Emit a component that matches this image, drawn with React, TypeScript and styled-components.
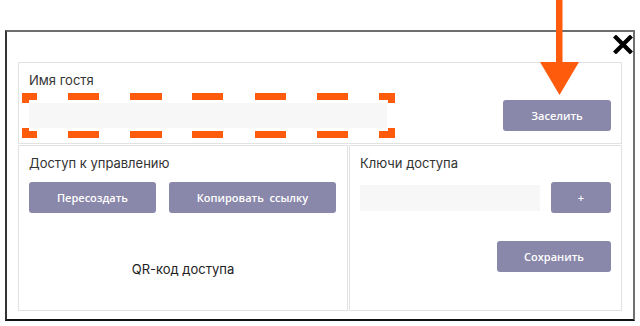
import * as React from 'react'
import styled, { createGlobalStyle } from 'styled-components'

const GlobalStyle = createGlobalStyle`
  html, body {
    margin: 0;
    padding: 0;
    background: #ffffff;
  }
  body {
    font-family: Inter, 'Open Sans', sans-serif;
  }
`

const Page = styled.div`
  position: relative;
  width: 640px;
  height: 326px;
  padding: 30px 0 0 5px;
  box-sizing: border-box;
`

const Frame = styled.div`
  width: 630px;
  height: 291px;
  box-sizing: border-box;
  border: 2px solid;
  border-color: #6e6e6e #707070 #111111 #333333;
  padding: 0 11px 8px 11px;
  display: flex;
  flex-direction: column;
`

const Header = styled.div`
  height: 30px;
  display: flex;
  justify-content: flex-end;
  align-items: flex-start;
  padding-top: 3px;
  box-sizing: border-box;
  margin-right: -11px;
`

const CloseButton = styled.button`
  border: 0;
  background: none;
  padding: 0;
  width: 20px;
  height: 19px;
  display: flex;
  cursor: pointer;
`

const Panel = styled.section<{ $grow?: boolean }>`
  border: 1px solid #e2e2e2;
  padding: 9px 10px 12px 10px;
  box-sizing: border-box;
  display: flex;
  flex-direction: column;
  ${({ $grow }) => ($grow ? 'flex: 1;' : '')}
`

const BottomRow = styled.div`
  display: flex;
  gap: 1px;
  margin-top: 1px;
  flex: 1;
`

const Title = styled.div`
  font-family: Inter, sans-serif;
  font-size: 13px;
  line-height: 16px;
  color: #333333;
`

const FieldRow = styled.div<{ $top: number }>`
  display: flex;
  align-items: center;
  justify-content: space-between;
  margin-top: ${({ $top }) => $top}px;
  gap: 10px;
`

const Input = styled.input<{ $width: number }>`
  width: ${({ $width }) => $width}px;
  height: 25px;
  border: 0;
  outline: none;
  background: #f7f7f7;
  padding: 0 8px;
  box-sizing: border-box;
  font-family: Inter, sans-serif;
  font-size: 12px;
`

const Button = styled.button<{ $width: number }>`
  width: ${({ $width }) => $width}px;
  height: 31px;
  border: 0;
  border-radius: 3px;
  background: #8987aa;
  color: #ffffff;
  font-family: 'Open Sans', sans-serif;
  font-weight: 600;
  font-size: 11px;
  white-space: pre;
  cursor: pointer;
  padding: 0;
`

const ButtonRow = styled.div`
  display: flex;
  gap: 13px;
  margin-top: 11px;
`

const QrCaption = styled.div`
  margin-top: 48px;
  text-align: center;
  font-family: Inter, sans-serif;
  font-size: 13px;
  line-height: 16px;
  color: #222222;
`

const SaveRow = styled.div`
  display: flex;
  justify-content: flex-end;
  margin-top: 28px;
`

const Highlight = styled.svg`
  position: absolute;
  left: 22px;
  top: 93px;
  pointer-events: none;
`

const Arrow = styled.svg`
  position: absolute;
  left: 540px;
  top: 0;
  pointer-events: none;
`

const ORANGE = '#fe5b0c'

// dashes along the top and bottom edge (page x, made local below)
const dashes: [number, number][] = [
  [22, 37],
  [68, 99],
  [130, 162],
  [192, 223],
  [255, 286],
  [317, 348],
  [379, 395]
]

const HighlightBox = () => (
  <Highlight width={373} height={45} viewBox="0 0 373 45">
    <g fill={ORANGE}>
      {dashes.map(([a, b]) => (
        <React.Fragment key={a}>
          <rect x={a - 22} y={0} width={b - a} height={7} />
          <rect x={a - 22} y={38} width={b - a} height={7} />
        </React.Fragment>
      ))}
      <rect x={0} y={0} width={7} height={10} />
      <rect x={0} y={35} width={7} height={10} />
      <rect x={366} y={0} width={7} height={10} />
      <rect x={366} y={35} width={7} height={10} />
    </g>
  </Highlight>
)

const App = () => (
  <Page>
    <GlobalStyle />
    <Frame>
      <Header>
        <CloseButton aria-label="close">
          <svg width="20" height="19" viewBox="0 0 20 19">
            <path
              d="M3 2.5 L17 16.5 M17 2.5 L3 16.5"
              stroke="#000"
              strokeWidth="4.2"
              strokeLinecap="square"
            />
          </svg>
        </CloseButton>
      </Header>
      <Panel>
        <Title>Имя гостя</Title>
        <FieldRow $top={12}>
          <Input $width={358} />
          <Button $width={108}>Заселить</Button>
        </FieldRow>
      </Panel>
      <BottomRow>
        <Panel style={{ width: 330 }}>
          <Title>Доступ к управлению</Title>
          <ButtonRow>
            <Button $width={127}>Пересоздать</Button>
            <Button $width={167}>Копировать  ссылку</Button>
          </ButtonRow>
          <QrCaption>QR-код доступа</QrCaption>
        </Panel>
        <Panel $grow>
          <Title>Ключи доступа</Title>
          <FieldRow $top={11}>
            <Input $width={180} style={{ height: 26 }} />
            <Button $width={60}>+</Button>
          </FieldRow>
          <SaveRow>
            <Button $width={114}>Сохранить</Button>
          </SaveRow>
        </Panel>
      </BottomRow>
    </Frame>
    <HighlightBox />
    <Arrow width={40} height={96} viewBox="0 0 40 96">
      <rect x={16} y={0} width={6.5} height={64} fill={ORANGE} />
      <polygon points="0,62 39,62 19.5,95" fill={ORANGE} />
    </Arrow>
  </Page>
)

export default App
